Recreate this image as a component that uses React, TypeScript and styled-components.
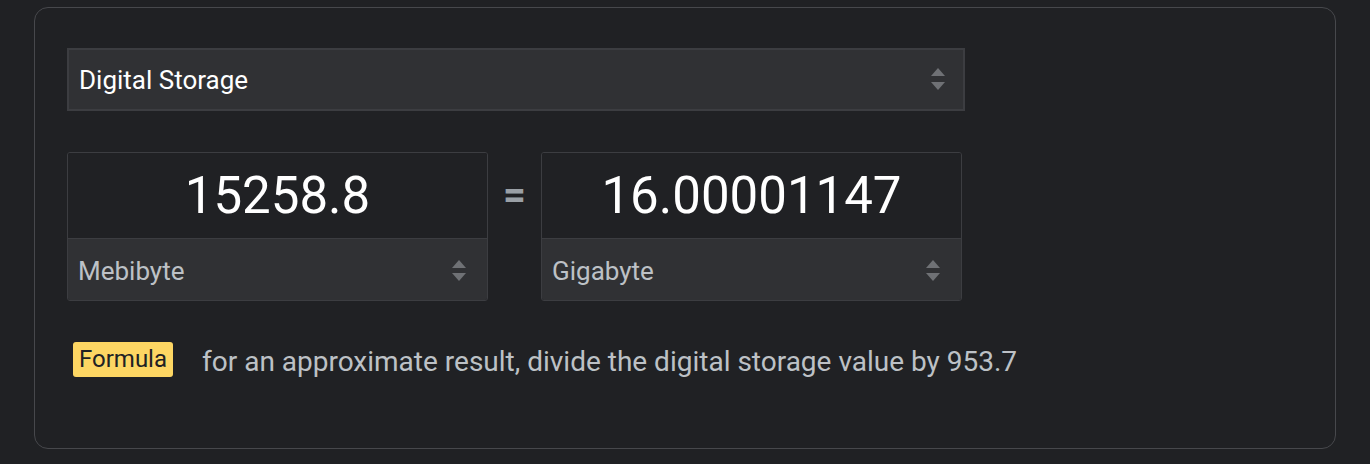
import React from 'react';
import styled, { createGlobalStyle } from 'styled-components';

const GlobalStyle = createGlobalStyle`
    html, body {
        margin: 0;
        padding: 0;
        background-color: #202124;
        font-family: Roboto, "Liberation Sans", Arial, sans-serif;
    }
`;

const Page = styled.div`
    padding: 7px 0 0 34px;
    width: 1370px;
    height: 464px;
    box-sizing: border-box;
`;

const Card = styled.div`
    width: 1302px;
    height: 442px;
    box-sizing: border-box;
    border: 1.5px solid #47484c;
    border-radius: 14px;
    padding: 40px 0 0 32px;
    display: flex;
    flex-direction: column;
    gap: 41px;
`;

const SelectBox = styled.div<{ $dark?: boolean }>`
    display: flex;
    align-items: center;
    justify-content: space-between;
    background-color: #303134;
    box-sizing: border-box;
    color: ${p => (p.$dark ? '#bdc1c6' : '#ffffff')};
    font-size: 26px;
    padding: 0 18px 0 10px;
`;

const CategorySelect = styled(SelectBox)`
    width: 898px;
    height: 63px;
    border: 2px solid #3c3d41;
`;

const Row = styled.div`
    display: flex;
    align-items: flex-start;
    gap: 15px;
`;

const UnitBox = styled.div`
    width: 421px;
    height: 149px;
    box-sizing: border-box;
    border: 1.5px solid #3c3d41;
    border-radius: 3px;
    display: flex;
    flex-direction: column;
    overflow: hidden;
`;

const NumberField = styled.div`
    height: 85px;
    display: flex;
    align-items: center;
    justify-content: center;
    color: #ffffff;
    font-size: 51px;
    background-color: #202124;
    border-bottom: 1.5px solid #3c3d41;
`;

const UnitSelect = styled(SelectBox)`
    flex: 1;
    padding: 2px 21px 0 10px;
`;

const Equals = styled.div`
    height: 85px;
    width: 23px;
    display: flex;
    align-items: center;
    justify-content: center;
    color: #9aa0a6;
    font-size: 40px;
    font-weight: 700;
`;

const FormulaRow = styled.div`
    display: flex;
    align-items: center;
    gap: 29px;
    padding-left: 6px;
    margin-top: -1px;
`;

const Badge = styled.span`
    background-color: #fdd663;
    color: #202124;
    font-size: 24px;
    padding: 3px 6px;
    border-radius: 3px;
    line-height: 29px;
`;

const Description = styled.span`
    color: #bdc1c6;
    font-size: 28px;
    padding-top: 4px;
`;

const Chevrons = ({ height }: { height: number }) => (
    <svg width="14" height={height} viewBox={`0 0 14 ${height}`}>
        <path d="M7 0 L14 8 L0 8 Z" fill="#6f7175" />
        <path d={`M0 ${height - 9} L14 ${height - 9} L7 ${height - 1} Z`} fill="#6f7175" />
    </svg>
);

export default function App() {
    return (
        <>
            <GlobalStyle />
            <Page>
                <Card>
                    <CategorySelect>
                        <span>Digital Storage</span>
                        <Chevrons height={23} />
                    </CategorySelect>
                    <Row>
                        <UnitBox>
                            <NumberField>15258.8</NumberField>
                            <UnitSelect $dark>
                                <span>Mebibyte</span>
                                <Chevrons height={22} />
                            </UnitSelect>
                        </UnitBox>
                        <Equals>=</Equals>
                        <UnitBox>
                            <NumberField>16.00001147</NumberField>
                            <UnitSelect $dark>
                                <span>Gigabyte</span>
                                <Chevrons height={22} />
                            </UnitSelect>
                        </UnitBox>
                    </Row>
                    <FormulaRow>
                        <Badge>Formula</Badge>
                        <Description>for an approximate result, divide the digital storage value by 953.7</Description>
                    </FormulaRow>
                </Card>
            </Page>
        </>
    );
}
